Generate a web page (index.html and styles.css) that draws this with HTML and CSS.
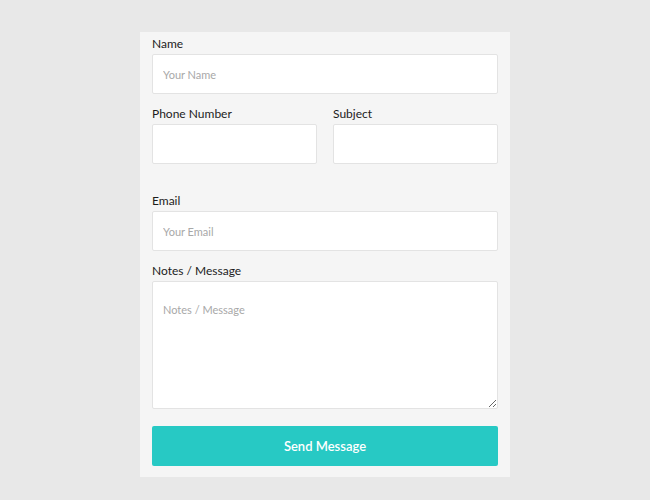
FILE: index.html
```html
<!DOCTYPE html>
<html>
<head>
<meta charset="utf-8">
<link rel="stylesheet" href="styles.css">
</head>
<body>
<form class="card">
  <div class="field">
    <label class="label">Name</label>
    <input class="input" type="text" placeholder="Your Name">
  </div>
  <div class="row">
    <div class="field">
      <label class="label">Phone Number</label>
      <input class="input" type="text">
    </div>
    <div class="field">
      <label class="label">Subject</label>
      <input class="input" type="text">
    </div>
  </div>
  <div class="field">
    <label class="label">Email</label>
    <input class="input" type="text" placeholder="Your Email">
  </div>
  <div class="field">
    <label class="label">Notes / Message</label>
    <textarea class="input textarea" placeholder="Notes / Message"></textarea>
  </div>
  <button class="btn" type="button">Send Message</button>
</form>
</body>
</html>
```
FILE: styles.css
```css
html, body {
  margin: 0;
  padding: 0;
  background: #e8e8e8;
  font-family: Lato, "Open Sans", sans-serif;
}
body {
  padding-top: 32px;
}
.card {
  width: 346px;
  margin: 0 0 0 140px;
  background: #f5f5f5;
  padding: 0 12px 11px 12px;
  display: flex;
  flex-direction: column;
}
.field {
  display: flex;
  flex-direction: column;
  margin-bottom: 8px;
  min-width: 0;
}
.row {
  display: grid;
  grid-template-columns: minmax(0, 1fr) minmax(0, 1fr);
  column-gap: 16px;
  margin-bottom: 17px;
}
.label {
  font-size: 12px;
  line-height: 22px;
  padding-top: 1px;
  margin-bottom: -1px;
  color: #1c1c1c;
}
.input {
  box-sizing: border-box;
  width: 100%;
  min-width: 0;
  height: 40px;
  border: 1px solid #e3e3e3;
  background: #fff;
  border-radius: 2px;
  padding: 0 10px;
  font-family: inherit;
  font-size: 11px;
  color: #333;
  outline: none;
  margin: 0;
}
.input::placeholder {
  color: #a8a8a8;
}
.textarea {
  height: 128px;
  padding: 21px 10px;
  resize: vertical;
  display: block;
}
.btn {
  margin-top: 9px;
  height: 40px;
  border: none;
  border-radius: 2px;
  background: #27c9c4;
  color: #fff;
  font-family: inherit;
  font-size: 13px;
  font-weight: 600;
}
```
